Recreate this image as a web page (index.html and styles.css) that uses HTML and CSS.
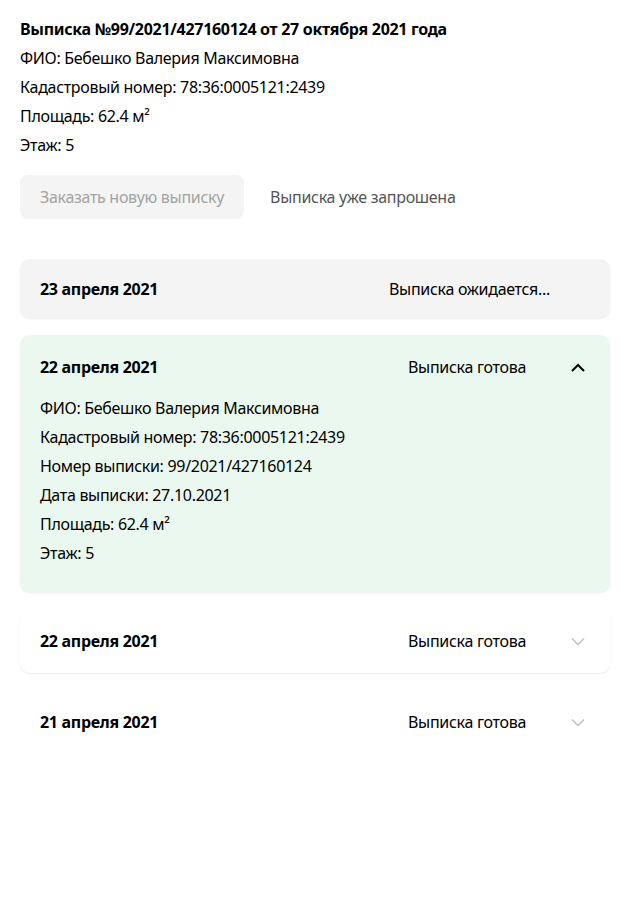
FILE: index.html
```html
<!DOCTYPE html>
<html lang="ru">
<head>
<meta charset="utf-8">
<link rel="stylesheet" href="styles.css">
</head>
<body>
<div class="page">
  <div class="info">
    <div class="title">Выписка №99/2021/427160124 от 27 октября 2021 года</div>
    <div class="line">ФИО: Бебешко Валерия Максимовна</div>
    <div class="line">Кадастровый номер: 78:36:0005121:2439</div>
    <div class="line">Площадь: 62.4 м²</div>
    <div class="line">Этаж: 5</div>
  </div>
  <div class="actions">
    <button class="btn" disabled>Заказать новую выписку</button>
    <span class="note">Выписка уже запрошена</span>
  </div>
  <div class="list">
    <div class="card card-pending">
      <div class="card-head">
        <span class="date">23 апреля 2021</span>
        <span class="status">Выписка ожидается...</span>
      </div>
    </div>
    <div class="card card-open">
      <div class="card-head">
        <span class="date">22 апреля 2021</span>
        <span class="status">Выписка готова</span>
        <svg class="chev" viewBox="0 0 14 9" width="14" height="9"><path d="M1 8 L7 2 L13 8" fill="none" stroke="#000" stroke-width="2"/></svg>
      </div>
      <div class="card-body">
        <div class="line">ФИО: Бебешко Валерия Максимовна</div>
        <div class="line">Кадастровый номер: 78:36:0005121:2439</div>
        <div class="line">Номер выписки: 99/2021/427160124</div>
        <div class="line">Дата выписки: 27.10.2021</div>
        <div class="line">Площадь: 62.4 м²</div>
        <div class="line">Этаж: 5</div>
      </div>
    </div>
    <div class="card card-closed">
      <div class="card-head">
        <span class="date">22 апреля 2021</span>
        <span class="status">Выписка готова</span>
        <svg class="chev" viewBox="0 0 14 9" width="14" height="9"><path d="M1 1.5 L7 7.5 L13 1.5" fill="none" stroke="#c4c4c4" stroke-width="1.6"/></svg>
      </div>
    </div>
    <div class="card card-closed card-last">
      <div class="card-head">
        <span class="date">21 апреля 2021</span>
        <span class="status">Выписка готова</span>
        <svg class="chev" viewBox="0 0 14 9" width="14" height="9"><path d="M1 1.5 L7 7.5 L13 1.5" fill="none" stroke="#c4c4c4" stroke-width="1.6"/></svg>
      </div>
    </div>
  </div>
</div>
</body>
</html>
```

FILE: styles.css
```css
* { box-sizing: border-box; }
body {
  margin: 0;
  background: #fff;
  font-family: "Noto Sans", "Open Sans", sans-serif;
  font-size: 16px;
  letter-spacing: -0.3px;
  color: #000;
}
.page {
  padding: 19px 20px 20px;
}
.info .title {
  font-weight: 700;
  line-height: 20px;
  margin-bottom: 9px;
}
.line {
  line-height: 20px;
  margin-bottom: 9px;
}
.info .line:last-child { margin-bottom: 0; }
.actions {
  display: flex;
  align-items: center;
  gap: 26px;
  margin-top: 20px;
}
.btn {
  font: inherit;
  letter-spacing: -0.3px;
  height: 44px;
  padding: 0 20px;
  border: none;
  border-radius: 8px;
  background: #f4f4f4;
  color: #a3a3a3;
}
.note {
  color: #555;
}
.list {
  margin-top: 40px;
  display: flex;
  flex-direction: column;
  gap: 17px;
}
.card {
  border-radius: 10px;
  box-shadow: 0 1px 2px rgba(0, 0, 0, 0.08);
  padding: 0 25px 0 20px;
}
.card-pending { background: #f4f4f4; }
.card-open { background: #ebf8ef; padding-bottom: 29px; }
.card-closed { background: #fff; }
.card-last { box-shadow: none; }
.card-head {
  display: flex;
  align-items: center;
  height: 64px;
}
.card-pending .card-head { height: 59px; }
.date {
  font-weight: 700;
  flex: 1;
}
.status {
  width: 163px;
}
.card-pending .status { width: 196px; }
.chev {
  width: 14px;
  height: 9px;
  flex: none;
}
.card-body { margin-top: -1px; }
.card-body .line:last-child { margin-bottom: 0; }
```
